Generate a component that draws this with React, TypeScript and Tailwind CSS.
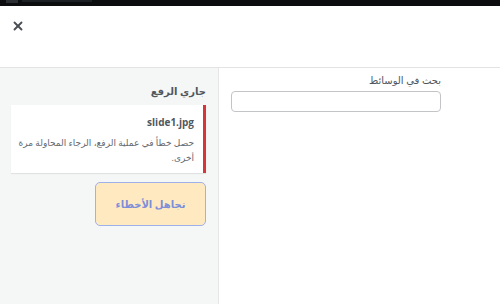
import { X } from "lucide-react";

// نافذة رفع الوسائط مع رسالة خطأ
export default function App() {
  return (
    <div className="flex h-[304px] w-[500px] flex-col overflow-hidden bg-white font-['Open_Sans','DejaVu_Sans',sans-serif]">
      <div className="flex h-[6px] items-start gap-[4px] bg-[#0c0d0f] pl-[6px]">
        <div className="h-[3px] w-[12px] bg-[#2c2f33]" />
        <div className="h-[2px] w-[70px] bg-[#1d2024]" />
      </div>
      <div className="flex h-[62px] border-b border-[#e3e3e3] pl-[11px] pt-[13px]">
        <X className="h-[14px] w-[14px] text-[#4a4f54]" strokeWidth={3.2} />
      </div>
      <div className="flex flex-1">
        <div dir="rtl" className="w-[219px] border-r border-[#e6e6e6] bg-[#f5f6f6] pr-[12px] pl-[11px] pt-[16px]">
          <div className="text-[10px] font-bold leading-[14px] text-[#50575e]">جاري الرفع</div>
          <div className="mt-[7px] border-r-[3px] border-[#d63638] bg-white pr-[9px] pl-[4px] pt-[10px] pb-[8px] shadow-[0_1px_1px_rgba(0,0,0,0.08)]">
            <div className="text-[10px] font-bold leading-[14px] text-[#50575e]">slide1.jpg</div>
            <div className="mt-[6px] text-[9px] leading-[15px] text-[#646970]">
              حصل خطأ في عملية الرفع، الرجاء المحاولة مرة أخرى.
            </div>
          </div>
          <button className="mt-[9px] flex h-[44px] w-[111px] items-center justify-center rounded-[5px] border border-[#9fb1ea] bg-[#ffe9c1] text-[10px] font-bold text-[#7b8ed9]">
            تجاهل الأخطاء
          </button>
        </div>
        <div dir="rtl" className="flex-1 pr-[59px] pt-[5px]">
          <div className="text-[10px] leading-[15px] text-[#50575e]">بحث في الوسائط</div>
          <input className="mt-[3px] h-[21px] w-[210px] rounded-[4px] border border-[#c3c4c7] bg-white" />
        </div>
      </div>
    </div>
  );
}
